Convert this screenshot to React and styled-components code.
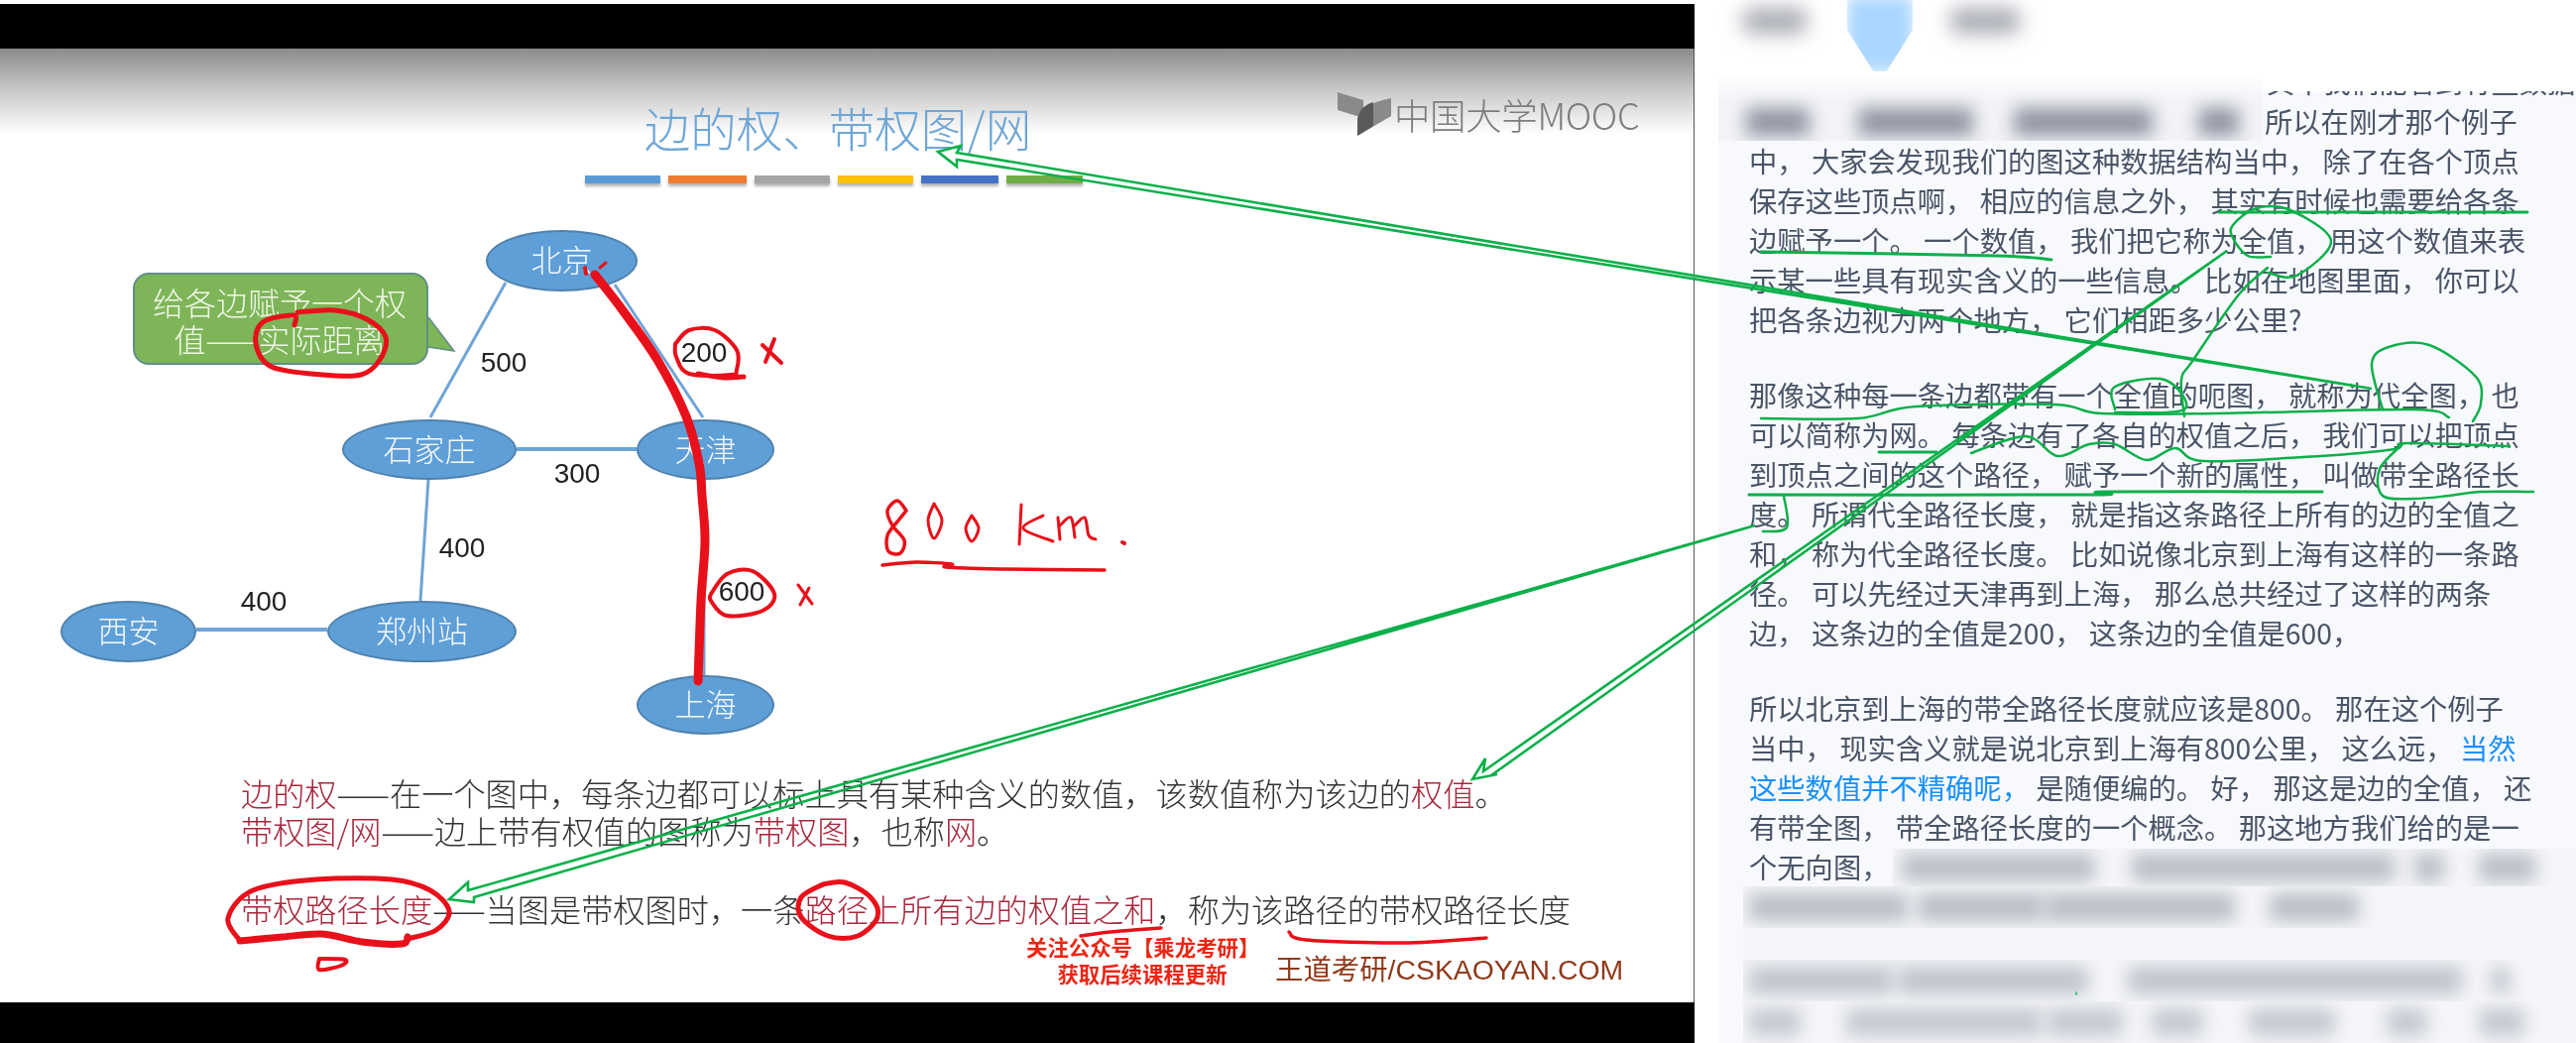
import React from "react";
import styled, { createGlobalStyle } from "styled-components";

const CJK = `"Noto Sans CJK SC", "Noto Sans", sans-serif`;

const Global = createGlobalStyle`
  html, body { margin: 0; padding: 0; background: #fff; }
  #root { width: 2598px; height: 1052px; overflow: hidden; }
`;

const Page = styled.div`
  position: relative;
  display: flex;
  width: 2598px;
  height: 1052px;
  overflow: hidden;
  background: #fff;
  font-family: ${CJK};
`;

const Video = styled.div`
  display: flex;
  flex-direction: column;
  width: 1709px;
  flex: none;
  padding-top: 4px;
  box-sizing: border-box;
`;
const BlackBar = styled.div`
  height: ${(p) => p.$h}px;
  flex: none;
  background: #000;
`;
const Slide = styled.div`
  flex: 1;
  display: flex;
  flex-direction: column;
  border-right: 1px solid #555;
  background: linear-gradient(#8b8b8b 0, #c6c6c6 40px, #fff 86px);
  filter: blur(0.45px);
  overflow: hidden;
`;
const SlideHead = styled.div`
  display: flex;
  height: 138px;
  flex: none;
  padding-left: 586px;
`;
const TitleStack = styled.div`
  width: 510px;
  display: flex;
  flex-direction: column;
  align-items: center;
`;
const Title = styled.div`
  margin-top: 48px;
  height: 62px;
  font-size: 46.5px;
  line-height: 62px;
  font-weight: 300;
  color: #6fa6d6;
  margin-left: 8px;
  white-space: nowrap;
`;
const Bars = styled.div`
  display: flex;
  gap: 8px;
  margin-top: 18px;
`;
const ColorBar = styled.div`
  width: ${(p) => p.$w}px;
  height: 8px;
  background: ${(p) => p.$c};
  box-shadow: 0 3px 3px rgba(0, 0, 0, 0.3);
`;
const Logo = styled.div`
  display: flex;
  align-items: center;
  align-self: flex-start;
  gap: 3px;
  margin: 44px 0 0 253px;
  height: 44px;
`;
const LogoText = styled.span`
  font-size: 36.5px;
  font-weight: 300;
  color: #7d7d7d;
  letter-spacing: -0.4px;
  white-space: nowrap;
`;

const Diagram = styled.div`
  position: relative;
  height: 593px;
  flex: none;
`;
const EdgeLayer = styled.svg`
  position: absolute;
  left: 0;
  top: 0;
`;
const Node = styled.div`
  position: absolute;
  left: ${(p) => p.$x}px;
  top: ${(p) => p.$y - 187}px;
  width: ${(p) => p.$w}px;
  height: ${(p) => p.$h}px;
  box-sizing: border-box;
  padding-bottom: 5px;
  border-radius: 50%;
  background: #5f9fd8;
  border: 2px solid #4f82ad;
  display: flex;
  align-items: center;
  justify-content: center;
  color: #f4f8fb;
  font-size: 31px;
  font-weight: 300;
`;
const Weight = styled.div`
  position: absolute;
  left: ${(p) => p.$x - 30}px;
  top: ${(p) => p.$y - 187 - 18}px;
  width: 60px;
  height: 36px;
  line-height: 36px;
  text-align: center;
  font-family: "Liberation Sans", sans-serif;
  font-size: 28px;
  color: #222;
`;
const Callout = styled.div`
  position: absolute;
  left: 134px;
  top: ${275 - 187}px;
  width: 298px;
  height: 93px;
  box-sizing: border-box;
  background: #7eb558;
  border: 2px solid #5f8f86;
  border-radius: 16px;
  color: #eff7e6;
  font-size: 32px;
  font-weight: 300;
  line-height: 37px;
  text-align: center;
  padding-top: 9px;
  padding-right: 2px;
  white-space: nowrap;
`;
const CalloutTail = styled.svg`
  position: absolute;
  left: 430px;
  top: ${318 - 187}px;
`;

const Defs = styled.div`
  padding-left: 243px;
  display: flex;
  flex-direction: column;
  font-size: 32.2px;
  font-weight: 300;
  color: #333;
  line-height: 38px;
  white-space: nowrap;
`;
const DefLine = styled.div`
  margin-top: ${(p) => p.$mt || 0}px;
`;
const Red = styled.span`
  color: #a8283c;
`;
const Marks = styled.div`
  display: flex;
  align-items: flex-end;
  margin-top: 6px;
  padding-left: 1035px;
`;
const Follow = styled.div`
  width: 234px;
  text-align: center;
  color: #ee2514;
  font-weight: 700;
  font-size: 21.4px;
  line-height: 27px;
  white-space: nowrap;
`;
const Site = styled.div`
  margin-left: 17px;
  margin-bottom: 2px;
  font-family: "Liberation Sans", ${CJK};
  font-size: 28.4px;
  font-weight: 400;
  line-height: 30px;
  color: #8f3a1a;
  white-space: nowrap;
`;

const Side = styled.div`
  position: relative;
  flex: 1;
  display: flex;
  flex-direction: column;
`;
const Tabs = styled.div`
  height: 92px;
  flex: none;
  display: flex;
  padding: 8px 0 0 49px;
  box-sizing: border-box;
  align-items: flex-start;
`;
const Tab = styled.div`
  width: ${(p) => p.$w}px;
  margin-right: ${(p) => p.$mr}px;
  height: 26px;
  border-radius: 8px;
  background: #a8abb3;
  filter: blur(10px);
`;
const ActiveTab = styled.div`
  width: 66px;
  margin-right: 38px;
  margin-top: -12px;
  height: 76px;
  background: #a9d6ff;
  clip-path: polygon(0 0, 100% 0, 100% 45%, 60% 100%, 40% 100%, 0 45%);
  filter: blur(8px);
`;
const Panel = styled.div`
  flex: 1;
  margin-left: 24px;
  background: #f8f9fd;
  overflow: hidden;
  padding-left: 31px;
  color: #4a5568;
  font-size: 28.3px;
  line-height: 40px;
  white-space: pre;
`;
const Para = styled.div`
  margin-bottom: 36px;
  filter: blur(0.35px);
`;
const ClippedLine = styled.div`
  margin-top: -30px;
  padding-left: 522px;
`;
const LeadLine = styled.div`
  padding-left: 520px;
`;
const Blue = styled.span`
  color: #1890ff;
`;
const TopBlur = styled.div`
  position: absolute;
  left: 24px;
  top: 75px;
  width: 549px;
  height: 67px;
  background: linear-gradient(#fff 0, #f3f4f8 40%, #f2f3f7 100%);
  display: flex;
  align-items: flex-end;
  padding: 0 0 5px 28px;
  box-sizing: border-box;
  overflow: hidden;
`;
const Blob = styled.div`
  flex: none;
  width: ${(p) => p.$w}px;
  margin-left: ${(p) => p.$ml}px;
  height: 28px;
  border-radius: 4px;
  background: ${(p) => p.$c};
  filter: blur(9px);
`;
const BottomBlur = styled.div`
  position: absolute;
  left: 49px;
  top: 856px;
  right: 0;
  display: flex;
  flex-direction: column;
`;
const BlurRow = styled.div`
  display: flex;
  align-items: center;
  height: ${(p) => p.$h}px;
  margin-left: ${(p) => p.$inset}px;
  padding-left: ${(p) => p.$pad}px;
  background: #f5f6f9;
  overflow: hidden;
`;
const Overlay = styled.svg`
  position: absolute;
  left: 0;
  top: 0;
  pointer-events: none;
`;

function curve(pts) {
  let d = `M${pts[0][0]} ${pts[0][1]}`;
  for (let i = 0; i < pts.length - 1; i++) {
    const p0 = pts[i - 1] || pts[i];
    const p1 = pts[i];
    const p2 = pts[i + 1];
    const p3 = pts[i + 2] || p2;
    const c1 = [p1[0] + (p2[0] - p0[0]) / 6, p1[1] + (p2[1] - p0[1]) / 6];
    const c2 = [p2[0] - (p3[0] - p1[0]) / 6, p2[1] - (p3[1] - p1[1]) / 6];
    d += ` C${c1[0]} ${c1[1]} ${c2[0]} ${c2[1]} ${p2[0]} ${p2[1]}`;
  }
  return d;
}

const RED = "#e8101a";
const GREEN = "#0cb04a";

const red = [
  { w: 9, p: [[600, 277], [628, 313], [663, 363], [692, 420], [705, 467], [708, 500], [711, 546], [707, 606], [704, 687]] },
  { w: 4, p: [[590, 270], [591, 276]] },
  { w: 3, p: [[605, 270], [611, 265]] },
  { w: 5, p: [[297, 328], [296, 318], [265, 325], [258, 347], [274, 370], [325, 378], [364, 378], [383, 363], [389, 340], [370, 322], [338, 313], [300, 315]] },
  { w: 4, p: [[681, 347], [695, 333], [721, 333], [743, 353], [743, 373], [737, 378], [695, 377], [682, 360], [681, 347]] },
  { w: 5, p: [[704, 377], [730, 381], [750, 380]] },
  { w: 4, p: [[781, 342], [772, 365]] },
  { w: 4, p: [[769, 348], [788, 366]] },
  { w: 4, p: [[717, 599], [733, 579], [759, 576], [781, 599], [769, 616], [733, 621], [717, 606], [717, 599]] },
  { w: 3, p: [[805, 590], [819, 609]] },
  { w: 3, p: [[816, 593], [807, 610]] },
  { w: 3.5, p: [[914, 515], [905, 505], [895, 515], [900, 530], [912, 545], [908, 558], [896, 556], [895, 540], [906, 525], [914, 515]] },
  { w: 3, p: [[942, 508], [936, 525], [942, 543], [950, 525], [942, 508]] },
  { w: 3, p: [[980, 520], [974, 533], [980, 546], [987, 533], [980, 520]] },
  { w: 3, p: [[1030, 509], [1028, 549]] },
  { w: 3, p: [[1052, 520], [1032, 533], [1062, 546]] },
  { w: 3, p: [[1067, 522], [1069, 544]] },
  { w: 3, p: [[1069, 530], [1080, 522], [1084, 542]] },
  { w: 3, p: [[1084, 530], [1094, 522], [1098, 540], [1105, 544]] },
  { w: 4, p: [[1132, 547], [1134, 548]] },
  { w: 3.5, p: [[890, 570], [924, 567], [960, 569], [954, 572], [1008, 574], [1114, 575]] },
  { w: 5, p: [[242, 949], [230, 926], [255, 898], [319, 887], [395, 887], [434, 898], [453, 919], [440, 938], [411, 947]] },
  { w: 7, p: [[242, 949], [285, 945], [325, 942], [365, 950], [405, 952], [411, 945]] },
  { w: 4, p: [[322, 967], [348, 968], [344, 974], [322, 978], [322, 967]] },
  { w: 5, p: [[830, 892], [852, 890], [878, 905], [885, 925], [865, 944], [835, 944], [808, 925], [808, 905], [830, 892]] },
  { w: 3.5, p: [[1090, 944], [1120, 940], [1171, 936]] },
  { w: 3.5, p: [[1300, 940], [1317, 948], [1415, 951], [1499, 946]] },
];

const green = [
  { w: 3, p: [[2238, 214], [2549, 214]] },
  { w: 3, p: [[1776, 254], [2014, 258], [2069, 262]] },
  { w: 2.5, p: [[2290, 259], [2267, 258], [2252, 240], [2252, 227], [2276, 210], [2310, 212], [2351, 243], [2316, 278], [2287, 275]] },
  { w: 2.5, p: [[2287, 270], [2258, 297], [2212, 363], [2200, 383], [2203, 420]] },
  { w: 2.5, p: [[2133, 413], [2133, 390], [2183, 383], [2203, 413], [2133, 416]] },
  { w: 2.5, p: [[1776, 422], [1874, 422], [1932, 410], [2072, 408], [2119, 417], [2235, 417], [2433, 413], [2470, 421]] },
  { w: 2.5, p: [[2403, 413], [2392, 367], [2409, 350], [2450, 348], [2497, 380], [2502, 407], [2494, 425]] },
  { w: 3, p: [[1895, 456], [1953, 456]] },
  { w: 2.5, p: [[1988, 457], [2043, 440], [2075, 460], [2107, 448], [2133, 448], [2165, 464], [2194, 452], [2223, 465], [2340, 460], [2415, 453], [2427, 447], [2531, 450]] },
  { w: 3, p: [[1764, 499], [2107, 499], [2124, 496], [2342, 496]] },
  { w: 2.5, p: [[2424, 447], [2400, 473], [2403, 500], [2435, 503], [2470, 500], [2502, 496], [2555, 496]] },
  { w: 2.5, p: [[1799, 500], [1802, 532], [1778, 536]] },
  { w: 1.5, p: [[2094, 1001], [2094, 1003]] },
];

const arrows = [
  "946,153 969,147 965,154 2392,392 965,161 965,168",
  "453,907 472,890 472,898 1770,530 478,905 478,910",
  "1485,786 1498,765 1496,778 2246,253 1504,782 1510,781",
];

const edges = [
  [510, 285, 434, 421, 3],
  [620, 287, 709, 421, 3],
  [521, 453, 642, 453, 4],
  [432, 484, 424, 606, 3],
  [198, 635, 330, 635, 4],
  [710, 484, 710, 681, 3],
];

const nodes = [
  ["北京", 490, 232, 153, 62],
  ["石家庄", 345, 423, 176, 61],
  ["天津", 642, 423, 139, 61],
  ["西安", 61, 606, 137, 62],
  ["郑州站", 330, 606, 191, 62],
  ["上海", 642, 681, 139, 60],
];
const weights = [
  ["500", 508, 366],
  ["200", 710, 356],
  ["300", 582, 478],
  ["400", 466, 553],
  ["400", 266, 607],
  ["600", 748, 597],
];
const bars = [
  [76, "#5b9bd5"],
  [79, "#ed7d31"],
  [76, "#a5a5a5"],
  [76, "#ffc000"],
  [78, "#4472c4"],
  [77, "#70ad47"],
];

const p1 = [
  "中， 大家会发现我们的图这种数据结构当中， 除了在各个顶点",
  "保存这些顶点啊， 相应的信息之外， 其实有时候也需要给各条",
  "边赋予一个。 一个数值， 我们把它称为全值， 用这个数值来表",
  "示某一些具有现实含义的一些信息。 比如在地图里面， 你可以",
  "把各条边视为两个地方， 它们相距多少公里?",
];
const p2 = [
  "那像这种每一条边都带有一个全值的呃图， 就称为代全图， 也",
  "可以简称为网。 每条边有了各自的权值之后， 我们可以把顶点",
  "到顶点之间的这个路径， 赋予一个新的属性， 叫做带全路径长",
  "度。 所谓代全路径长度， 就是指这条路径上所有的边的全值之",
  "和， 称为代全路径长度。 比如说像北京到上海有这样的一条路",
  "径。 可以先经过天津再到上海， 那么总共经过了这样的两条",
  "边， 这条边的全值是200， 这条边的全值是600，",
];

const topBlobs = [
  [0, 64],
  [49, 116],
  [41, 140],
  [46, 41],
];
const bottomRows = [
  { h: 38, inset: 151, pad: 9, c: "#b9bdc6", b: [[0, 195], [37, 265], [20, 30], [35, 57]] },
  { h: 42, inset: 0, pad: 6, c: "#b9bdc6", b: [[0, 160], [10, 128], [0, 192], [35, 90]] },
  { h: 32, inset: 0, pad: 6, c: "transparent", b: [] },
  { h: 42, inset: 0, pad: 6, c: "#bfc3cc", b: [[0, 145], [5, 192], [40, 337], [30, 18]] },
  { h: 42, inset: 0, pad: 6, c: "#c4c8d0", b: [[0, 52], [46, 198], [5, 76], [29, 52], [46, 87], [52, 41], [52, 46]] },
];

export default function App() {
  return (
    <Page>
      <Global />
      <Video>
        <BlackBar $h={45} />
        <Slide>
          <SlideHead>
            <TitleStack>
              <Title>边的权、带权图/网</Title>
              <Bars>
                {bars.map(([w, c]) => (
                  <ColorBar key={c} $w={w} $c={c} />
                ))}
              </Bars>
            </TitleStack>
            <Logo>
              <svg width="54" height="44" viewBox="0 0 54 44">
                <path d="M0 0 L26 8 L26 26 L0 18 Z" fill="#8a8a8a" />
                <path d="M54 6 L54 24 L20 44 L20 28 Q22 12 54 6 Z" fill="#8a8a8a" />
                <path d="M20 28 Q22 14 36 10 L36 34 L20 44 Z" fill="#5a5a5a" />
              </svg>
              <LogoText>中国大学MOOC</LogoText>
            </Logo>
          </SlideHead>
          <Diagram>
            <EdgeLayer width="1708" height="593" viewBox="0 187 1708 593">
              {edges.map(([a, b, c, d, w]) => (
                <line key={`${a}${b}${c}`} x1={a} y1={b} x2={c} y2={d} stroke="#6fa4d6" strokeWidth={w} />
              ))}
            </EdgeLayer>
            {nodes.map(([t, x, y, w, h]) => (
              <Node key={t} $x={x} $y={y} $w={w} $h={h}>
                {t}
              </Node>
            ))}
            {weights.map(([t, x, y]) => (
              <Weight key={`${t}${x}`} $x={x} $y={y}>
                {t}
              </Weight>
            ))}
            <CalloutTail width="30" height="40" viewBox="0 0 30 40">
              <path d="M0 0 L28 36 L0 32 Z" fill="#7eb558" />
              <path d="M2 2 L28 36 L2 32" fill="none" stroke="#5f8f86" strokeWidth="1.5" />
            </CalloutTail>
            <Callout>
              给各边赋予一个权
              <br />
              值——实际距离
            </Callout>
          </Diagram>
          <Defs>
            <DefLine>
              <Red>边的权</Red>——在一个图中，每条边都可以标上具有某种含义的数值，该数值称为该边的<Red>权值</Red>。
            </DefLine>
            <DefLine>
              <Red>带权图/网</Red>——边上带有权值的图称为<Red>带权图</Red>，也称<Red>网</Red>。
            </DefLine>
            <DefLine $mt={41}>
              <Red>带权路径长度</Red>——当图是带权图时，一条<Red>路径上所有边的权值之和</Red>，称为该路径的带权路径长度
            </DefLine>
          </Defs>
          <Marks>
            <Follow>
              关注公众号【乘龙考研】
              <br />
              获取后续课程更新
            </Follow>
            <Site>王道考研/CSKAOYAN.COM</Site>
          </Marks>
        </Slide>
        <BlackBar $h={41} />
      </Video>
      <Side>
        <Tabs>
          <Tab $w={64} $mr={41} />
          <ActiveTab />
          <Tab $w={70} $mr={0} />
        </Tabs>
        <Panel>
          <Para>
            <ClippedLine>其中我们能看到有些数据的，</ClippedLine>
            <LeadLine>所以在刚才那个例子</LeadLine>
            {p1.map((l) => (
              <div key={l}>{l}</div>
            ))}
          </Para>
          <Para>
            {p2.map((l) => (
              <div key={l}>{l}</div>
            ))}
          </Para>
          <Para>
            <div>所以北京到上海的带全路径长度就应该是800。 那在这个例子</div>
            <div>
              当中， 现实含义就是说北京到上海有800公里， 这么远， <Blue>当然</Blue>
            </div>
            <div>
              <Blue>这些数值并不精确呢，</Blue> 是随便编的。 好， 那这是边的全值， 还
            </div>
            <div>有带全图， 带全路径长度的一个概念。 那这地方我们给的是一</div>
            <div>个无向图，</div>
          </Para>
        </Panel>
        <TopBlur>
          {topBlobs.map(([ml, w]) => (
            <Blob key={w} $ml={ml} $w={w} $c="#9094a2" />
          ))}
        </TopBlur>
        <BottomBlur>
          {bottomRows.map((r) => (
            <BlurRow key={`${r.h}${r.c}`} $h={r.h} $inset={r.inset} $pad={r.pad}>
              {r.b.map(([ml, w], i) => (
                <Blob key={i} $ml={ml} $w={w} $c={r.c} />
              ))}
            </BlurRow>
          ))}
        </BottomBlur>
      </Side>
      <Overlay width="2598" height="1052" viewBox="0 0 2598 1052" fill="none" strokeLinecap="round" strokeLinejoin="round">
        {arrows.map((a) => (
          <polygon key={a} points={a} stroke={GREEN} strokeWidth="2.6" strokeLinejoin="miter" />
        ))}
        {green.map((s, i) => (
          <path key={i} d={curve(s.p)} stroke={GREEN} strokeWidth={s.w} />
        ))}
        {red.map((s, i) => (
          <path key={i} d={curve(s.p)} stroke={RED} strokeWidth={s.w} />
        ))}
      </Overlay>
    </Page>
  );
}
